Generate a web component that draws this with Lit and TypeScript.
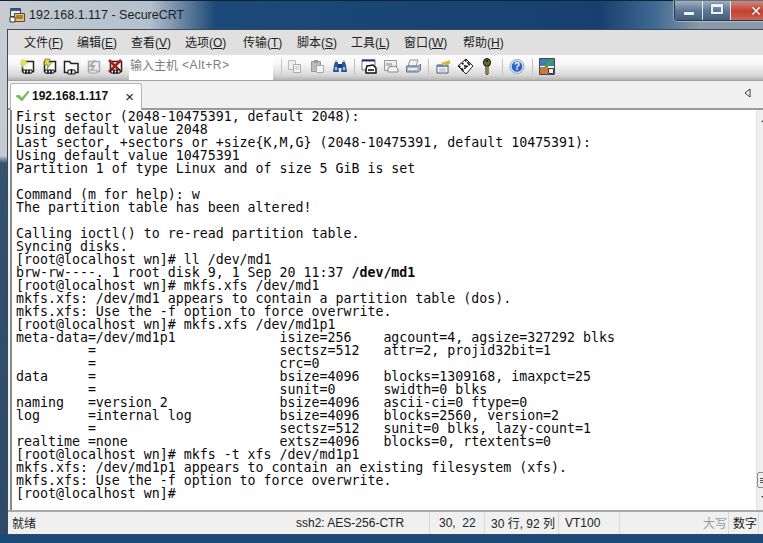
import { LitElement, html, css, svg } from "lit";
import { customElement } from "lit/decorators.js";

const LINES = [
  "First sector (2048-10475391, default 2048):",
  "Using default value 2048",
  "Last sector, +sectors or +size{K,M,G} (2048-10475391, default 10475391):",
  "Using default value 10475391",
  "Partition 1 of type Linux and of size 5 GiB is set",
  "",
  "Command (m for help): w",
  "The partition table has been altered!",
  "",
  "Calling ioctl() to re-read partition table.",
  "Syncing disks.",
  "[root@localhost wn]# ll /dev/md1",
  "@@brw-rw----. 1 root disk 9, 1 Sep 20 11:37 |/dev/md1",
  "[root@localhost wn]# mkfs.xfs /dev/md1",
  "mkfs.xfs: /dev/md1 appears to contain a partition table (dos).",
  "mkfs.xfs: Use the -f option to force overwrite.",
  "[root@localhost wn]# mkfs.xfs /dev/md1p1",
  "meta-data=/dev/md1p1             isize=256    agcount=4, agsize=327292 blks",
  "         =                       sectsz=512   attr=2, projid32bit=1",
  "         =                       crc=0",
  "data     =                       bsize=4096   blocks=1309168, imaxpct=25",
  "         =                       sunit=0      swidth=0 blks",
  "naming   =version 2              bsize=4096   ascii-ci=0 ftype=0",
  "log      =internal log           bsize=4096   blocks=2560, version=2",
  "         =                       sectsz=512   sunit=0 blks, lazy-count=1",
  "realtime =none                   extsz=4096   blocks=0, rtextents=0",
  "[root@localhost wn]# mkfs -t xfs /dev/md1p1",
  "mkfs.xfs: /dev/md1p1 appears to contain an existing filesystem (xfs).",
  "mkfs.xfs: Use the -f option to force overwrite.",
  "[root@localhost wn]#",
];

const MENUS: [string, string, number][] = [
  ["文件", "F", 53], ["编辑", "E", 54], ["查看", "V", 54], ["选项", "O", 58], ["传输", "T", 54],
  ["脚本", "S", 54], ["工具", "L", 53], ["窗口", "W", 59], ["帮助", "H", 50],
];

const plug = svg`<path d="M4 12h9v3H4z" fill="#fff" stroke="#111"/><path d="M7 12v4M10 12v4" stroke="#111" stroke-width="1.6"/>`;
const win = (fill = "#fff", stroke = "#222") => svg`<path d="M3.5 3.5h11v10h-11z" fill="${fill}" stroke="${stroke}" stroke-width="1.5"/>`;

const ICONS = {
  connect: svg`${win()}<path d="M5 0l1 3 3-2-2 3 3 1-3 1 1 3-3-2-2 3 0-4-3 0 3-2-2-3 3 1z" fill="#dfe25a"/>${plug}`,
  quick: svg`${win()}<path d="M4 1h5L8 4h3l-5 7 1-4H3z" fill="#e8d530" stroke="#556" stroke-width=".6"/>${plug}`,
  tab: svg`<path d="M1.5 3.5h5l1.5 2h7v9H1.5z" fill="#fff" stroke="#222" stroke-width="1.5"/><path d="M5 12h7v4H5z" fill="#fff" stroke="#111"/><path d="M8.5 11v5" stroke="#111" stroke-width="1.6"/>`,
  reconnect: svg`<path d="M3.5 3.5h11v10h-11z" fill="#eee" stroke="#aaa" stroke-width="1.5"/><path d="M10 2L5 8h4l-3 5" fill="none" stroke="#aaa" stroke-width="1.8"/><path d="M4 12h8v3H4z" fill="#ddd" stroke="#aaa"/>`,
  disconnect: svg`${win()}<path d="M2 2l12 12M14 2L2 14" stroke="#a81e1a" stroke-width="2.6"/>${plug}`,
  copy: svg`<path d="M2.5 2.5h7v9h-7z" fill="#eee" stroke="#bbb"/><path d="M7.5 6.5h7v8h-7z" fill="#f4f4f4" stroke="#aaa"/><path d="M9 9h4M9 11h4" stroke="#bbb"/>`,
  paste: svg`<path d="M2.5 3.5h9v10h-9z" fill="#bbb" stroke="#999"/><path d="M5 2h4v3H5z" fill="#999"/><path d="M7.5 7.5h7v7h-7z" fill="#f4f4f4" stroke="#aaa"/>`,
  find: svg`<path d="M3 4h3v3l1 7H1l1-7zM10 4h3l1 3 1 7H9l1-7z" fill="#27589c"/><path d="M6 6h4v4H6z" fill="#1c3c72"/><path d="M3 2h2v2H3zM11 2h2v2h-2zM3 9h2v3H3zM11 9h2v3h-2z" fill="#a9c6ea"/>`,
  log: svg`<path d="M1 2h13v10H1z" fill="#fff" stroke="#777"/><path d="M1 2.5h13" stroke="#16327c" stroke-width="2"/><path d="M6 8l6-1 3 3v5H5v-4z" fill="#fff" stroke="#111" stroke-width="1.5"/><path d="M7 12h6" stroke="#111" stroke-width="1.6"/>`,
  print2: svg`<path d="M1.5 2.5h12v10h-12z" fill="#eee" stroke="#999"/><path d="M3 5h6v3H3z" fill="#bbb"/><path d="M6 9l6-1 3 3v3H5v-3z" fill="#f4f4f4" stroke="#888"/>`,
  print: svg`<path d="M5 2h8l-2 6H3z" fill="#f2f4f8" stroke="#8a97a8"/><path d="M1.5 8h12l2-2v6l-2 2h-12z" fill="#a9b6c6" stroke="#66748a"/><path d="M3 10h9v2H3z" fill="#e7ecf2"/>`,
  session: svg`<path d="M2 7h11v8H2z" fill="#fff" stroke="#555"/><path d="M2 7h11v2H2z" fill="#5a8ac6"/><path d="M4 11h7M4 13h7" stroke="#8ab"/><path d="M6 5l9-3v4l-6 2z" fill="#d9b93c"/>`,
  map: svg`<path d="M1 8l8-7 7 7-7 8z" fill="#fff" stroke="#222"/><path d="M2 8l4 4M5 5l4 4M8 2l4 4M5 13l4-4M9 9l4-3" stroke="#111" stroke-width="1.7" stroke-dasharray="2 1.2"/>`,
  key: svg`<ellipse cx="8" cy="4.5" rx="3.6" ry="4" fill="#6c6428" stroke="#111"/><circle cx="8" cy="3" r="1" fill="#111"/><path d="M6.8 8h2.4v8l-1.2 1-1.2-1z" fill="#a89a38" stroke="#111" stroke-width=".6"/>`,
  help: svg`<circle cx="8" cy="8.5" r="7" fill="#dfe8f6" stroke="#8fa6c8"/><circle cx="8" cy="8.5" r="5.3" fill="#2a62c4"/><text x="8" y="12" font-size="10" font-weight="700" text-anchor="middle" fill="#fff" font-family="Liberation Sans">?</text>`,
  options: svg`<path d="M.5 .5h15v16H.5z" fill="#fff" stroke="#445"/><path d="M1 1h14v7H1z" fill="#3f7fb8"/><path d="M5 8l7-7 3 1-7 8z" fill="#3fa34a"/><path d="M1 9h8v7H1z" fill="#c87a3c"/><path d="M9.5 10.5h5v5h-5z" fill="#eee" stroke="#333"/>`,
};

type IconName = keyof typeof ICONS;

@customElement("app-root")
export class AppRoot extends LitElement {
  static styles = css`
    :host { display: block; width: 763px; height: 543px; overflow: hidden; font-family: "Liberation Sans", "Noto Sans CJK SC", sans-serif; }
    .window {
      width: 772px; height: 543px; box-sizing: border-box; display: flex; flex-direction: column;
      background:
        linear-gradient(90deg, #c6ccd2 0, #b4c0cc 150px, #1c4a78 215px, #17406e 600px, #3f6a92 655px, #8a9aa9 700px) top / 100% 29px no-repeat,
        linear-gradient(#1a4a7a, #1a4a7a) bottom / 100% 9px no-repeat,
        linear-gradient(#c9ced4 0, #c4cad0 155px, #34516e 162px, #2c4a68 100%);
      border-top: 1px solid #0f2236; padding: 0 0 8px 7px; position: relative;
    }
    .title { height: 28px; box-sizing: border-box; padding: 0 0 1px 2px; display: flex; align-items: center; gap: 4px; flex: none; font-size: 12.5px; color: #1b1f24; white-space: nowrap; }
    .title svg { flex: none; }
    .controls { position: absolute; right: 9px; top: 0; display: flex; height: 19px; border: 1px solid #26384c; border-top: 0; border-right: 0; border-radius: 0 0 0 4px; overflow: hidden; box-shadow: 0 0 0 1px rgba(255,255,255,.35); }
    .ctl { display: flex; align-items: center; justify-content: center; width: 27px; background: linear-gradient(#9fb0c0, #5c7a96 50%, #435f7c); border-right: 1px solid #dfe6ec; }
    .ctl.close { width: 32px; border-right: 0; justify-content: flex-end; padding-right: 1px; box-sizing: border-box; background: linear-gradient(#c98a80, #c8402c 55%, #c4685a); }
    .ctl.min i { width: 10px; height: 3px; margin-top: 6px; background: #eef2f6; box-shadow: 0 0 1px #223; display: block; }
    .ctl.max i { width: 8px; height: 5px; border: 2px solid #eef2f6; border-top-width: 3px; box-shadow: 0 0 1px #223; display: block; margin-bottom: 3px; }
    .x { color: #fff; font: 700 14px "DejaVu Sans", sans-serif; text-shadow: 0 0 2px #522; }
    .client { flex: 1; min-height: 0; display: flex; flex-direction: column; background: #f0f0f0; border: 1px solid #3a4a58; border-right: 0; }
    .menu { height: 25px; flex: none; box-sizing: border-box; background: #e0e0e0; display: flex; align-items: center; padding: 0 0 3px 16px; font-size: 12px; color: #222; white-space: nowrap; }
    .menu span { flex: none; }
    .menu u { text-underline-offset: 1px; }
    .tools { height: 25px; flex: none; box-sizing: content-box; display: flex; align-items: center; padding-left: 11px; background: linear-gradient(#fdfdfd 0, #f8f8f8 35%, #d8d8d8 80%, #b5b5b5 100%); border-bottom: 1px solid #a4a4a4; }
    .tools svg { flex: none; display: block; }
    .ico { width: 16px; height: 17px; margin: 0 6px 2px 0; }
    .addr { width: 144px; height: 25px; flex: none; background: #fff; margin: 0 8px 0 0; font-size: 12px; color: #7c7c7c; display: flex; align-items: center; padding: 0 0 6px 1px; box-sizing: border-box; white-space: nowrap; }
    .addr span { letter-spacing: .55px; margin-left: 4px; }
    .sep { width: 1px; height: 16px; background: #c2c2c2; margin: 0 6px 2px 1px; flex: none; }
    .sep.first { margin-left: 0; margin-right: 4px; }
    .tabs { height: 27px; flex: none; background: #f0f0f0; display: flex; align-items: flex-end; position: relative; border-bottom: 2px solid #9a9a9a; box-sizing: content-box; }
    .tab { height: 27px; width: 132px; margin: 0 0 -2px 2px; box-sizing: border-box; background: #fff; border: 1px solid #b4b4b4; border-bottom: 0; border-radius: 3px 3px 0 0; display: flex; align-items: center; padding: 0 0 2px 4px; font-size: 12px; font-weight: 700; color: #111; gap: 2px; position: relative; }
    .tabx { position: absolute; right: 7px; top: 4px; font: 400 15px "Liberation Sans", sans-serif; color: #222; }
    .arrow { position: absolute; right: 21px; top: 7px; }
    .main { flex: 1; min-height: 0; display: flex; background: #fff; margin-left: 2px; border-left: 2px solid #8a8a8a; }
    .term { flex: 1; min-width: 0; padding: 0 0 0 4px; overflow: hidden; font: 13.28px/13px "DejaVu Sans Mono", monospace; color: #0a0a0a; white-space: pre; }
    .term b { font-weight: 700; }
    .line { height: 13px; }
    .scroll { width: 16px; flex: none; background: #f0f0f0; border-left: 1px solid #e2e2e2; display: flex; flex-direction: column; align-items: center; justify-content: space-between; padding: 8px 0 10px; box-sizing: border-box; position: relative; }
    .tri { width: 0; height: 0; border-left: 4px solid transparent; border-right: 4px solid transparent; }
    .tri.up { border-bottom: 4px solid #444; }
    .tri.down { border-top: 4px solid #444; }
    .thumb { position: absolute; left: 0; right: 0; bottom: 22px; height: 16px; background: #ececec; border: 1px solid #8c8c8c; border-radius: 2px; box-sizing: border-box; display: flex; flex-direction: column; gap: 1px; align-items: center; justify-content: center; }
    .thumb i { width: 9px; height: 1px; background: #555; display: block; }
    .status { height: 24px; flex: none; display: flex; align-items: stretch; background: #f0f0f0; border-top: 2px solid #a8a8a8; font-size: 12px; color: #222; white-space: nowrap; box-sizing: border-box; }
    .cell { display: flex; align-items: center; border-left: 1px solid #d8d8d8; box-sizing: border-box; flex: none; padding: 0 0 1px 6px; }
    .cell.ready { flex: 1; border-left: 0; padding-left: 4px; }
    .cell.ssh { width: 136px; border-left: 0; padding-left: 3px; }
    .cell.pos { width: 55px; padding-left: 9px; }
    .cell.size { width: 74px; }
    .cell.term-type { width: 61px; }
    .cell.caps { width: 109px; justify-content: flex-end; padding-right: 1px; color: #9a9a9a; }
    .cell.num { width: 30px; padding-left: 4px; }
    .cell.rest { width: 14px; }
  `;

  private ico(n: IconName) {
    return html`<svg class="ico" viewBox="0 0 16 17">${ICONS[n]}</svg>`;
  }

  render() {
    return html`<div class="window">
      <div class="title">
        <svg width="16" height="16" viewBox="0 0 16 16"><path d="M1.5 1.5h10v8h-10z" fill="#e8eef6" stroke="#445"/><path d="M2 2h9v2H2z" fill="#2c5c9c"/><path d="M5.5 6.5h10v8h-10z" fill="#f0c060" stroke="#643"/><path d="M7 9h7M7 11h7" stroke="#543"/><path d="M1 10h5v5H1z" fill="#fff" stroke="#333"/></svg>
        <span>192.168.1.117 - SecureCRT</span>
      </div>
      <div class="controls">
        <div class="ctl min"><i></i></div>
        <div class="ctl max"><i></i></div>
        <div class="ctl close"><span class="x">✕</span></div>
      </div>
      <div class="client">
        <div class="menu">
          ${MENUS.map(([n, k, w]) => html`<span style="width:${w}px">${n}(<u>${k}</u>)</span>`)}
        </div>
        <div class="tools">
          ${this.ico("connect")}${this.ico("quick")}${this.ico("tab")}${this.ico("reconnect")}${this.ico("disconnect")}
          <div class="addr">输入主机<span>&lt;Alt+R&gt;</span></div>
          <div class="sep first"></div>
          ${this.ico("copy")}<span style="width:1px"></span>${this.ico("paste")}<span style="width:1px"></span>${this.ico("find")}
          <div class="sep" style="margin-left:0"></div>
          ${this.ico("log")}${this.ico("print2")}${this.ico("print")}
          <div class="sep"></div>
          ${this.ico("session")}${this.ico("map")}${this.ico("key")}
          <div class="sep"></div>
          ${this.ico("help")}
          <div class="sep"></div>
          ${this.ico("options")}
        </div>
        <div class="tabs">
          <div class="tab">
            <svg width="15" height="12" viewBox="0 0 15 12"><path d="M1 6l3-1 3 3 6-7 1 1-7 9z" fill="#7cc04c" stroke="#5a9e3a" stroke-width=".5"/></svg>
            <span>192.168.1.117</span>
            <span class="tabx">×</span>
          </div>
          <svg class="arrow" width="7" height="10" viewBox="0 0 7 10"><path d="M6 1v8L1 5z" fill="#fff" stroke="#333"/></svg>
        </div>
        <div class="main">
          <div class="term">${LINES.map((l) => {
            if (l.startsWith("@@")) {
              const [a, b] = l.slice(2).split("|");
              return html`<div class="line">${a}<b>${b}</b></div>`;
            }
            return html`<div class="line">${l}</div>`;
          })}</div>
          <div class="scroll">
            <div class="tri up"></div>
            <div class="thumb"><i></i><i></i><i></i></div>
            <div class="tri down"></div>
          </div>
        </div>
        <div class="status">
          <div class="cell ready">就绪</div>
          <div class="cell ssh">ssh2: AES-256-CTR</div>
          <div class="cell pos">30,&nbsp; 22</div>
          <div class="cell size">30 行, 92 列</div>
          <div class="cell term-type">VT100</div>
          <div class="cell caps">大写</div>
          <div class="cell num">数字</div>
          <div class="cell rest"></div>
        </div>
      </div>
    </div>`;
  }
}
